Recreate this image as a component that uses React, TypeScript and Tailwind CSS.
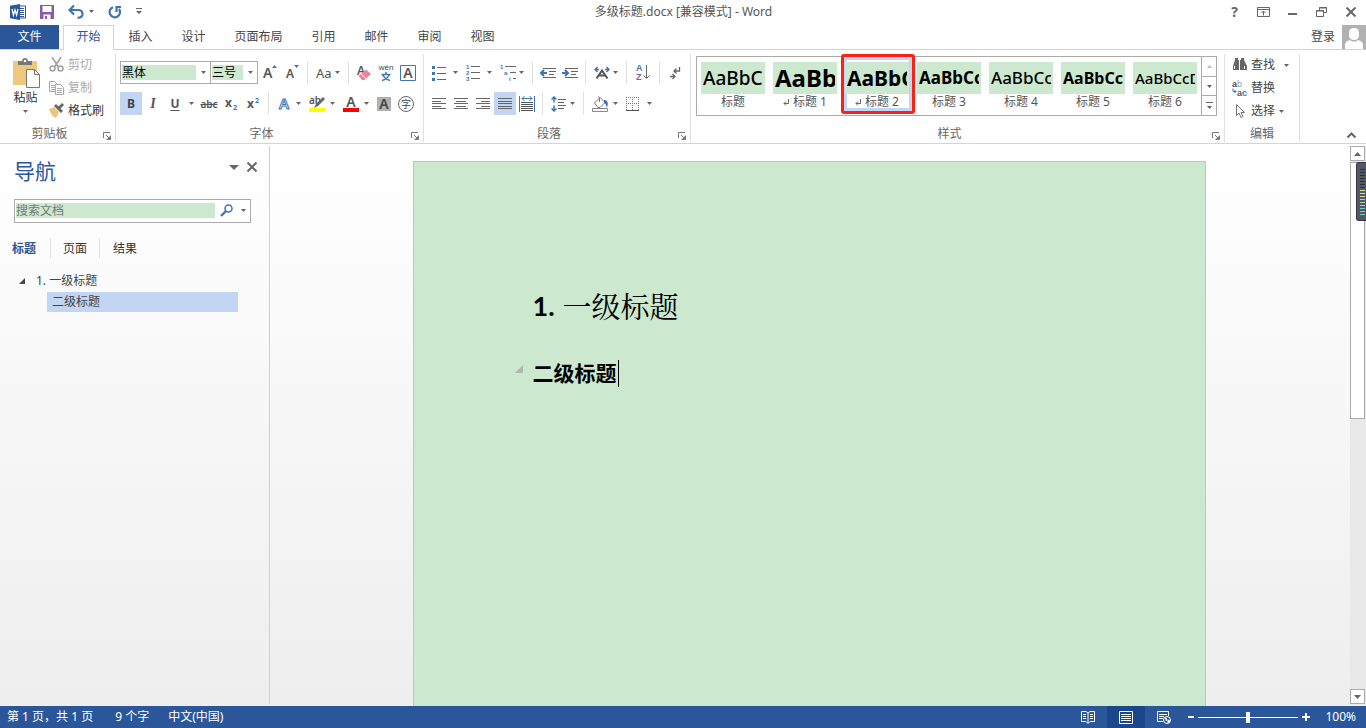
import React from 'react';
import clsx from 'clsx';

const TABS = [
  { label: '插入', width: 'w-[53px]' },
  { label: '设计', width: 'w-[53px]' },
  { label: '页面布局', width: 'w-[77px]' },
  { label: '引用', width: 'w-[53px]' },
  { label: '邮件', width: 'w-[53px]' },
  { label: '审阅', width: 'w-[53px]' },
  { label: '视图', width: 'w-[53px]' },
];

const STYLES = [
  { name: '标题', sample: 'AaBbC', text: 'text-[19px] font-medium', linked: false },
  { name: '标题 1', sample: 'AaBb', text: 'text-[24px] font-bold', linked: true },
  { name: '标题 2', sample: 'AaBbC', text: 'text-[21px] font-bold', linked: true, selected: true },
  { name: '标题 3', sample: 'AaBbCc', text: 'text-[17px] font-bold', linked: false },
  { name: '标题 4', sample: 'AaBbCc', text: 'text-[17px] font-medium', linked: false },
  { name: '标题 5', sample: 'AaBbCc', text: 'text-[16px] font-bold', linked: false },
  { name: '标题 6', sample: 'AaBbCcD', text: 'text-[15px] font-medium', linked: false },
];

const Caret = ({ className = 'text-[#666]' }: { className?: string }) => (
  <svg width="5" height="3" viewBox="0 0 5 3" className={clsx('shrink-0', className)} aria-hidden="true">
    <path d="M0 0h5L2.500 3z" fill="currentColor" />
  </svg>
);

const Sep = () => <span className="mx-1 h-[23px] w-px shrink-0 bg-[#e1e1e1]" />;

interface ToolProps {
  label: string;
  children: React.ReactNode;
  active?: boolean;
  width?: string;
}

const Tool: React.FC<ToolProps> = ({ label, children, active, width = 'w-[22px]' }) => (
  <button
    aria-label={label}
    className={clsx('flex h-[23px] shrink-0 items-center justify-center', width, active ? 'bg-[#c2d5f2]' : 'hover:bg-[#d5e1f2]')}
  >
    {children}
  </button>
);

// Icon with a drop-down arrow beside it
const SplitTool: React.FC<ToolProps> = ({ label, children, width = 'w-[34px]' }) => (
  <button aria-label={label} className={clsx('flex h-[23px] shrink-0 items-center justify-between px-1 hover:bg-[#d5e1f2]', width)}>
    {children}
    <Caret />
  </button>
);

const Group: React.FC<{ title: string; width: string; launcher?: boolean; children: React.ReactNode }> = ({
  title,
  width,
  launcher = true,
  children,
}) => (
  <section className={clsx('flex shrink-0 flex-col border-r border-[#e1e1e1]', width)}>
    <div className="h-[72px]">{children}</div>
    <div className="flex h-4 items-center">
      <span className="flex-1 text-center leading-4 text-[#666]">{title}</span>
      {launcher && (
        <button aria-label={`${title}设置`} className="flex w-4 justify-center pt-1">
          <svg width="8" height="8" viewBox="0 0 8 8" fill="none" stroke="#777">
            <path d="M.5 6V.5H7M3 3l3 3M7.500 3.500v4h-4" />
            <path d="M7 4v3H4z" fill="#777" stroke="none" />
          </svg>
        </button>
      )}
    </div>
  </section>
);

const Lines = ({ rows }: { rows: [number, number][] }) => (
  <svg width="14" height="12" viewBox="0 0 14 12" stroke="#666">
    {rows.map(([x1, x2], i) => (
      <path key={i} d={`M${x1} ${i * 2.5 + 0.5}H${x2}`} shapeRendering="crispEdges" />
    ))}
  </svg>
);

const TitleBar = () => (
  <header className="flex h-[25px] items-center pb-[2px]">
    <div className="flex flex-1 items-center pl-[10px]">
      <svg width="16" height="16" viewBox="0 0 16 16" aria-label="Word">
        <path d="M9 2h6.500v12H9z" fill="#fff" stroke="#2b579a" />
        <path d="M10 4.500h4M10 6.500h4M10 8.500h4M10 10.500h4M10 12.500h4" stroke="#2b579a" />
        <path d="M0 1.800L10 0v16L0 14.200z" fill="#2b579a" />
        <path d="M2 5l1.400 6L5 6l1.600 5L8 5" fill="none" stroke="#fff" strokeWidth="1.300" />
      </svg>
      <button aria-label="保存" className="ml-[14px]">
        <svg width="14" height="14" viewBox="0 0 14 14">
          <path d="M0 0h14v14H0z" fill="#8b5aa8" />
          <path d="M2.500 1h9v6h-9zM3.500 9.500h7V14h-7z" fill="#fff" />
          <path d="M5 11h2v3H5z" fill="#8b5aa8" />
        </svg>
      </button>
      <button aria-label="撤消" className="ml-[14px] flex items-center gap-[5px]">
        <svg width="16" height="14" viewBox="0 0 16 14" fill="none" stroke="#3f75b5" strokeWidth="2.200">
          <path d="M1.500 5H10c3 0 4.500 1.500 4.500 4s-2 3.800-5 3.800" />
          <path d="M6 .5L1.500 5 6 9.500" />
        </svg>
        <Caret />
      </button>
      <button aria-label="重复" className="ml-[14px]">
        <svg width="14" height="14" viewBox="0 0 14 14" fill="none" stroke="#3f75b5" strokeWidth="2.200">
          <path d="M5 2.200A5.200 5.200 0 1 0 11 4" />
          <path d="M8.500 7V2H13" />
        </svg>
      </button>
      <button aria-label="自定义快速访问工具栏" className="ml-[14px]">
        <svg width="6" height="7" viewBox="0 0 6 7" fill="#666">
          <path d="M0 0h6v1H0zM0 3h6L3 6z" />
        </svg>
      </button>
    </div>
    <h1 className="text-[#555]">多级标题.docx [兼容模式] - Word</h1>
    <div className="flex flex-1 items-center justify-end gap-4 pr-[9px] text-[#666]">
      <button aria-label="帮助" className="w-[13px] text-center text-[14px] leading-4 font-bold">?</button>
      <button aria-label="功能区显示选项">
        <svg width="13" height="10" viewBox="0 0 13 10" fill="none" stroke="currentColor">
          <path d="M.5.5h12v9H.5zM.5 2.500h12M6.500 8.500v-4M4.500 6l2-2 2 2" />
        </svg>
      </button>
      <button aria-label="最小化">
        <svg width="13" height="10" viewBox="0 0 13 10" fill="currentColor"><path d="M2 6h9v2H2z" /></svg>
      </button>
      <button aria-label="还原">
        <svg width="13" height="10" viewBox="0 0 13 10" fill="none" stroke="currentColor">
          <path d="M4.500 3V.5h7v5H9M1.500 3.500h7v6h-7zM4 1h8M1 4h8" />
        </svg>
      </button>
      <button aria-label="关闭">
        <svg width="13" height="10" viewBox="0 0 13 10" stroke="currentColor" strokeWidth="2"><path d="M2.500.5l9 9M11.500.5l-9 9" /></svg>
      </button>
    </div>
  </header>
);

const TabRow = () => (
  <nav className="flex h-[25px] items-stretch border-b border-[#d4d4d4]">
    <button className="w-[59px] bg-[#2b579a] text-white">文件</button>
    <button className="-mb-px ml-1 w-[51px] border border-b-0 border-[#d4d4d4] bg-white pb-[2px] text-[#2b579a]">开始</button>
    {TABS.map((tab) => (
      <button key={tab.label} className={clsx('text-[#444]', tab.width)}>{tab.label}</button>
    ))}
    <div className="ml-auto flex items-center gap-[7px]">
      <button className="text-[#444]">登录</button>
      <svg width="24" height="24" viewBox="0 0 24 24" aria-hidden="true">
        <path d="M0 0h24v24H0z" fill="#b1b1b1" />
        <rect x="7" y="3" width="10" height="12" rx="4.500" fill="#fff" />
        <path d="M3 24v-4c0-3 2-4 5-5 2 2 6 2 8 0 3 1 5 2 5 5v4z" fill="#fff" />
      </svg>
    </div>
  </nav>
);

const ClipboardGroup = () => (
  <Group title="剪贴板" width="w-[116px]">
    <div className="flex pt-[3px] pl-[11px]">
      <button className="flex w-[29px] flex-col items-center">
        <svg width="29" height="32" viewBox="0 0 29 32" aria-hidden="true">
          <path d="M2 4h24v24H2z" fill="#edc87e" />
          <path d="M7 8V4h4c0-4 6-4 6 0h4v4z" fill="#777" />
          <circle cx="14" cy="4" r="1.300" fill="#fff" />
          <path d="M15.500 12.500h8l5 5v13h-13z" fill="#fff" stroke="#777" />
          <path d="M23.500 12.500v5h5" fill="none" stroke="#777" />
        </svg>
        <span className="pt-px leading-4 whitespace-nowrap text-[#333]">粘贴</span>
        <span className="pt-1"><Caret className="block text-[#666]" /></span>
      </button>
      <div className="ml-[9px] flex flex-col">
        <button className="flex h-[23px] items-start gap-1 text-[#aaa]">
          <svg width="15" height="15" viewBox="0 0 15 15" fill="none" stroke="#a3a3a3" strokeWidth="1.600">
            <path d="M3 0l6.500 10M12 0L5.500 10" />
            <circle cx="3.500" cy="11.500" r="2.500" />
            <circle cx="11.500" cy="11.500" r="2.500" />
          </svg>
          <span className="leading-4">剪切</span>
        </button>
        <button className="flex h-[23px] items-start gap-1 text-[#aaa]">
          <svg width="15" height="15" viewBox="0 0 15 15" fill="#fff" stroke="#aaa">
            <path d="M.5 1.500h5l3 3v7h-8zM2 5.500h4M2 7.500h4M2 9.500h4" />
            <path d="M6.500 4.500h5l3 3v7h-8zM8 8.500h5M8 10.500h5M8 12.500h5" />
          </svg>
          <span className="leading-4">复制</span>
        </button>
        <button className="flex h-[23px] items-start gap-1 text-[#333]">
          <svg width="15" height="15" viewBox="0 0 15 15">
            <path d="M0 6l5-2 5 5-3 6c-3-1-6-5-7-9z" fill="#edc47c" />
            <path d="M5 3l2-2 2.500 2.500L13 0l2 2-3.500 3.500L14 8l-2 2z" fill="#666" />
          </svg>
          <span className="leading-4">格式刷</span>
        </button>
      </div>
    </div>
  </Group>
);

const FieldSelect = ({ label, value, width }: { label: string; value: string; width: string }) => (
  <div className={clsx('flex h-[23px] shrink-0 items-center border border-[#ababab] bg-white pl-px', width)}>
    <select aria-label={label} className="h-[15px] min-w-0 flex-1 appearance-none bg-[#cce8cf] leading-[15px] text-black">
      <option>{value}</option>
    </select>
    <span className="flex w-[14px] justify-center"><Caret /></span>
  </div>
);

const FontGroup = () => (
  <Group title="字体" width="w-[308px]">
    <div className="flex flex-col gap-2 pt-[7px] pl-1">
      <div className="flex">
        <FieldSelect label="字体" value="黑体" width="w-[91px]" />
        <FieldSelect label="字号" value="三号" width="-ml-px mr-px w-[48px]" />
        <Tool label="增大字号">
          <svg width="14" height="16" viewBox="0 0 14 16" className="overflow-visible">
            <text x="0" y="13" fontSize="14" fontWeight="600" fill="#555">A</text>
            <path d="M9 3l2.500-3L14 3z" fill="#3f75b5" />
          </svg>
        </Tool>
        <Tool label="减小字号">
          <svg width="14" height="16" viewBox="0 0 14 16" className="overflow-visible">
            <text x="1" y="13" fontSize="12" fontWeight="600" fill="#555">A</text>
            <path d="M9 0h5l-2.500 3z" fill="#3f75b5" />
          </svg>
        </Tool>
        <Sep />
        <SplitTool label="更改大小写" width="w-8">
          <span className="text-[13px] text-[#555]">Aa</span>
        </SplitTool>
        <Sep />
        <Tool label="清除所有格式">
          <svg width="16" height="16" viewBox="0 0 16 16" className="overflow-visible">
            <text x="1" y="10" fontSize="12" fontWeight="600" fill="#555">A</text>
            <path d="M2.500 11L10 4.500l5 4.500-6.500 6H6z" fill="#e7849b" />
            <path d="M5 8.500l4.500 5" stroke="#fff" />
          </svg>
        </Tool>
        <Tool label="拼音指南">
          <svg width="18" height="18" viewBox="0 0 18 18" className="overflow-visible">
            <text x="9" y="6" fontSize="8" textAnchor="middle" fill="#444" className="font-['Liberation_Sans',sans-serif]">wén</text>
            <path d="M9 8v2M4.500 10.500h9M6 11c1 2.500 3 4.500 7 5.500M12 11c-1 2.500-3 4.500-7 5.500" fill="none" stroke="#3f75b5" strokeWidth="1.500" />
          </svg>
        </Tool>
        <Tool label="字符边框">
          <svg width="16" height="16" viewBox="0 0 16 16" className="overflow-visible">
            <path d="M.5.5h15v15H.5z" fill="#fff" stroke="#3f75b5" />
            <text x="8" y="13" fontSize="14" fontWeight="600" textAnchor="middle" fill="#555">A</text>
          </svg>
        </Tool>
      </div>
      <div className="flex">
        <Tool label="加粗" active><span className="text-[12px] font-bold text-[#444]">B</span></Tool>
        <Tool label="倾斜"><span className="font-['Liberation_Serif',serif] text-[14px] font-bold text-[#555] italic">I</span></Tool>
        <SplitTool label="下划线">
          <span className="w-[14px] text-center font-bold text-[#555] underline underline-offset-2">U</span>
        </SplitTool>
        <Tool label="删除线"><span className="text-[10px] font-semibold text-[#555] line-through">abc</span></Tool>
        <Tool label="下标">
          <svg width="14" height="14" viewBox="0 0 14 14" className="overflow-visible">
            <text x="1" y="10" fontSize="12" fontWeight="700" fill="#555">x</text>
            <text x="9" y="13" fontSize="7" fontWeight="700" fill="#3f75b5">2</text>
          </svg>
        </Tool>
        <Tool label="上标">
          <svg width="14" height="14" viewBox="0 0 14 14" className="overflow-visible">
            <text x="1" y="11" fontSize="12" fontWeight="700" fill="#555">x</text>
            <text x="9" y="6" fontSize="7" fontWeight="700" fill="#3f75b5">2</text>
          </svg>
        </Tool>
        <Sep />
        <SplitTool label="文本效果" width="w-8">
          <svg width="14" height="16" viewBox="0 0 14 16" className="overflow-visible">
            <text x="7" y="13" fontSize="15" fontWeight="600" textAnchor="middle" fill="#fff" stroke="#3f75b5">A</text>
          </svg>
        </SplitTool>
        <SplitTool label="突出显示">
          <svg width="16" height="16" viewBox="0 0 16 16" className="overflow-visible">
            <path d="M0 12h16v4H0z" fill="#ff0" />
            <text x="0" y="8" fontSize="10" fontWeight="600" fill="#555">ab</text>
            <path d="M14 1l2 2-7 7-4 2 2-4z" fill="#666" />
          </svg>
        </SplitTool>
        <SplitTool label="字体颜色">
          <svg width="16" height="16" viewBox="0 0 16 16" className="overflow-visible">
            <path d="M0 12h16v4H0z" fill="#f00" />
            <text x="8" y="11" fontSize="14" fontWeight="600" textAnchor="middle" fill="#555">A</text>
          </svg>
        </SplitTool>
        <Tool label="字符底纹">
          <svg width="14" height="14" viewBox="0 0 14 14" className="overflow-visible">
            <path d="M0 0h14v14H0z" fill="#b1b1b1" />
            <text x="7" y="12" fontSize="14" fontWeight="600" textAnchor="middle" fill="#444">A</text>
          </svg>
        </Tool>
        <Tool label="带圈字符">
          <svg width="16" height="16" viewBox="0 0 16 16" className="overflow-visible">
            <circle cx="8" cy="8" r="7.500" fill="none" stroke="#666" />
            <text x="8" y="12" fontSize="10" textAnchor="middle" fill="#444">字</text>
          </svg>
        </Tool>
      </div>
    </div>
  </Group>
);

const ParagraphGroup = () => (
  <Group title="段落" width="w-[267px]">
    <div className="flex flex-col gap-2 pt-[7px] pl-1">
      <div className="flex">
        <SplitTool label="项目符号">
          <svg width="14" height="16" viewBox="0 0 14 16">
            <path d="M0 1h3v3H0zM0 7h3v3H0zM0 13h3v3H0z" fill="#3f75b5" />
            <path d="M5 2.500h9M5 8.500h9M5 14.500h9" stroke="#666" />
          </svg>
        </SplitTool>
        <SplitTool label="编号">
          <svg width="14" height="17" viewBox="0 0 14 17" className="overflow-visible">
            <g fontSize="6" fontWeight="700" fill="#3f75b5" className="font-['Liberation_Sans',sans-serif]">
              <text x="0" y="5">1</text>
              <text x="0" y="11">2</text>
              <text x="0" y="17">3</text>
            </g>
            <path d="M5 2.500h9M5 8.500h9M5 14.500h9" stroke="#666" />
          </svg>
        </SplitTool>
        <SplitTool label="多级列表" width="w-8">
          <svg width="16" height="17" viewBox="0 0 16 17" className="overflow-visible">
            <g fontSize="6" fontWeight="700" fill="#3f75b5" className="font-['Liberation_Sans',sans-serif]">
              <text x="0" y="5">1</text>
              <text x="4" y="11">a</text>
              <text x="9" y="17">i</text>
            </g>
            <path d="M5 2.500h11M10 8.500h6M13 14.500h3" stroke="#666" />
          </svg>
        </SplitTool>
        <Sep />
        <Tool label="减少缩进量">
          <svg width="16" height="12" viewBox="0 0 16 12">
            <path d="M3 1.500h13M9 4.500h7M9 7.500h5M3 10.500h13" stroke="#666" />
            <path d="M1 6h6M4 3L1 6l3 3" fill="none" stroke="#3f75b5" strokeWidth="2" />
          </svg>
        </Tool>
        <Tool label="增加缩进量">
          <svg width="16" height="12" viewBox="0 0 16 12">
            <path d="M3 1.500h13M9 4.500h7M9 7.500h5M3 10.500h13" stroke="#666" />
            <path d="M0 6h6M3 3l3 3-3 3" fill="none" stroke="#3f75b5" strokeWidth="2" />
          </svg>
        </Tool>
        <Sep />
        <SplitTool label="中文版式" width="w-8">
          <svg width="16" height="14" viewBox="0 0 16 14" fill="none">
            <path d="M2.500 12.500L8 4.500l5.500 8M5 9.500h6" stroke="#555" strokeWidth="2" />
            <path d="M5 3.500H1M3.500 1L1 3.500 3.500 6M11 3.500h4M12.500 1L15 3.500 12.500 6" stroke="#3f75b5" strokeWidth="1.500" />
          </svg>
        </SplitTool>
        <Sep />
        <Tool label="排序" width="w-6">
          <svg width="14" height="17" viewBox="0 0 14 17" className="overflow-visible">
            <g fontSize="9" fontWeight="700" className="font-['Liberation_Sans',sans-serif]">
              <text x="0" y="7" fill="#3f75b5">A</text>
              <text x="0" y="16" fill="#8b5aa8">Z</text>
            </g>
            <path d="M10.500 1v13M7.500 11.500l3 3 3-3" fill="none" stroke="#666" />
          </svg>
        </Tool>
        <Sep />
        <Tool label="显示编辑标记">
          <svg width="12" height="14" viewBox="0 0 12 14" fill="none" stroke="#666">
            <path d="M10.500 1v4H5M7.500 2.500L5 5l2.500 2.500M1 10.500h5M3.500 8L6 10.500 3.500 13" strokeWidth="1.300" />
          </svg>
        </Tool>
      </div>
      <div className="flex">
        <Tool label="左对齐"><Lines rows={[[0, 14], [0, 9], [0, 14], [0, 9], [0, 14]]} /></Tool>
        <Tool label="居中"><Lines rows={[[0, 14], [2, 12], [0, 14], [2, 12], [0, 14]]} /></Tool>
        <Tool label="右对齐"><Lines rows={[[0, 14], [5, 14], [0, 14], [5, 14], [0, 14]]} /></Tool>
        <Tool label="两端对齐" active><Lines rows={[[0, 14], [0, 14], [0, 14], [0, 14], [0, 14]]} /></Tool>
        <Tool label="分散对齐">
          <svg width="16" height="16" viewBox="0 0 16 16">
            <path d="M.5 0v16M15.500 0v16M3 2.500h10M5.500 0L3 2.500 5.500 5M10.500 0L13 2.500 10.500 5" fill="none" stroke="#3f75b5" />
            <path d="M2 6.500h12M2 8.500h12M2 10.500h12M2 12.500h12M2 14.500h12" stroke="#555" />
          </svg>
        </Tool>
        <Sep />
        <SplitTool label="行距" width="w-8">
          <svg width="15" height="16" viewBox="0 0 15 16">
            <path d="M3 1v5.500M3 9.500V15M.5 3.500L3 1l2.500 2.500M.5 12.500L3 15l2.500-2.500" fill="none" stroke="#3f75b5" strokeWidth="1.500" />
            <path d="M7 3.500h8M7 6.500h6M7 9.500h8M7 12.500h6" stroke="#666" />
          </svg>
        </SplitTool>
        <Sep />
        <SplitTool label="底纹">
          <svg width="16" height="16" viewBox="0 0 16 16" fill="none">
            <path d="M2.500 7L8 1.500l5 5L8 11.500H6z" fill="#fff" stroke="#777" />
            <path d="M7.500 6V1.500L6 .5" stroke="#777" />
            <path d="M12 4c4 0 4.500 3 3 8-1-3-1-4-3-5z" fill="#3f75b5" />
            <path d="M.5 12.500h15v3H.5z" fill="#fff" stroke="#888" />
          </svg>
        </SplitTool>
        <SplitTool label="边框">
          <svg width="14" height="14" viewBox="0 0 14 14" stroke="#777" fill="none">
            <path d="M.5 0v13M6.500 0v13M12.500 0v13M0 .5h13M0 6.500h13" strokeDasharray="1 1" />
            <path d="M0 13.500h13" stroke="#555" />
          </svg>
        </SplitTool>
      </div>
    </div>
  </Group>
);

const StylesGroup = () => (
  <Group title="样式" width="w-[534px]">
    <div className="flex pt-[2px] pl-[5px]">
      <div className="flex h-[60px] border border-[#ababab]">
        {STYLES.map((s) => (
          <button key={s.name} className="relative flex w-[72px] flex-col items-stretch px-1 pt-[5px]">
            {s.selected && <span className="absolute top-0 right-px bottom-1 left-[3px] border-[3px] border-[#c2d5f2]" />}
            <span className={clsx("relative flex h-8 bg-[#cce8cf] px-[2px] font-['Noto_Sans',sans-serif] text-black", s.text)}>
              <span className="overflow-hidden leading-8">{s.sample}</span>
            </span>
            <span className="relative flex items-center justify-center gap-1 leading-4 text-[#555]">
              {s.linked && (
                <svg width="6" height="7" viewBox="0 0 6 7" fill="none" stroke="#666"><path d="M5.500 0v4.500H1M3 2.500l-2 2 2 2" /></svg>
              )}
              {s.name}
            </span>
            {s.selected && <span className="absolute -top-[3px] -right-[2px] bottom-px left-0 rounded-[3px] border-[3px] border-[#fa2115]" />}
          </button>
        ))}
        <div className="flex w-[15px] flex-col divide-y divide-[#ababab] border-l border-[#ababab]">
          <button aria-label="向上" className="flex h-5 items-center justify-center">
            <svg width="5" height="3" viewBox="0 0 5 3"><path d="M0 3h5L2.500 0z" fill="#bbb" /></svg>
          </button>
          <button aria-label="向下" className="flex h-[19px] items-center justify-center"><Caret /></button>
          <button aria-label="其他" className="flex flex-1 items-center justify-center">
            <svg width="7" height="7" viewBox="0 0 7 7" fill="#666"><path d="M0 0h7v1H0zM1 4h5L3.500 7z" /></svg>
          </button>
        </div>
      </div>
    </div>
  </Group>
);

const EditingGroup = () => (
  <Group title="编辑" width="w-[75px]" launcher={false}>
    <div className="flex flex-col pt-[3px] pl-[7px] text-[#444]">
      <button className="flex h-[23px] items-start gap-1">
        <svg width="15" height="15" viewBox="0 0 15 15" fill="#666">
          <path d="M3 1h3v2h1v10H1V9l2-6zM9 1h3v2l3 6v4H8V3h1z" />
          <path d="M2.500 9v3M12.500 9v3M7.500 2v3M7.500 9v4" stroke="#fff" />
        </svg>
        <span className="leading-4">查找</span>
        <span className="pt-[7px] pl-[5px]"><Caret className="block text-[#666]" /></span>
      </button>
      <button className="flex h-[23px] items-start gap-1">
        <svg width="15" height="16" viewBox="0 0 15 16" className="overflow-visible">
          <g fontSize="9" fontWeight="700" className="font-['Liberation_Sans',sans-serif]">
            <text x="0" y="7" fill="#555">a<tspan fill="#999" fontWeight="400">b</tspan></text>
            <text x="5" y="16" fill="#555">a<tspan fill="#3f75b5">c</tspan></text>
          </g>
          <path d="M1 8.500v3h3M2.500 10L4 11.500 2.500 13" fill="none" stroke="#3f75b5" />
        </svg>
        <span className="leading-4">替换</span>
      </button>
      <button className="flex h-[23px] items-start gap-1">
        <svg width="15" height="16" viewBox="0 0 15 16" fill="#fff" stroke="#777">
          <path d="M4.500 1.500v11l2.500-2.500 2 4.500 2-1-2-4h3.500z" />
        </svg>
        <span className="leading-4">选择</span>
        <span className="pt-[7px]"><Caret className="block text-[#666]" /></span>
      </button>
    </div>
  </Group>
);

const NavigationPane = () => (
  <aside className="mt-[2px] mb-[2px] flex w-[270px] shrink-0 flex-col border-r border-[#d0d0d0]">
    <div className="flex items-center pt-[10px] pr-3 pl-[14px]">
      <h2 className="flex-1 text-[21px] leading-[30px] text-[#2b579a]">导航</h2>
      <button aria-label="任务窗格选项" className="mb-2">
        <svg width="10" height="5" viewBox="0 0 10 5"><path d="M0 0h10L5 5z" fill="#666" /></svg>
      </button>
      <button aria-label="关闭导航" className="mb-2 ml-2">
        <svg width="10" height="10" viewBox="0 0 10 10" stroke="#666" strokeWidth="2"><path d="M.5.5l9 9M9.500.5l-9 9" /></svg>
      </button>
    </div>
    <div className="mt-[13px] mr-[18px] ml-[14px] flex h-6 items-center border border-[#ababab] bg-white pb-px pl-px">
      <input
        aria-label="搜索文档"
        placeholder="搜索文档"
        className="h-[15px] min-w-0 flex-1 bg-[#cce8cf] leading-[15px] placeholder:text-[#777]"
      />
      <button aria-label="搜索" className="ml-[5px]">
        <svg width="13" height="13" viewBox="0 0 13 13" fill="none" stroke="#3f75b5">
          <circle cx="8.500" cy="4.500" r="3.500" strokeWidth="1.500" />
          <path d="M6 7l-5 5" strokeWidth="2.400" />
        </svg>
      </button>
      <button aria-label="搜索选项" className="mr-1 ml-2"><Caret /></button>
    </div>
    <div className="mt-[15px] flex h-5 items-center divide-x divide-[#e1e1e1] text-[#333]">
      <button className="h-5 w-[51px] pt-[2px] pr-[2px] text-center font-bold text-[#2b579a]">标题</button>
      <button className="h-5 w-[49px] pt-[2px]">页面</button>
      <button className="h-5 w-[50px] pt-[2px]">结果</button>
    </div>
    <ul className="mt-3 text-[#444]">
      <li className="flex h-[22px] items-center pl-[19px]">
        <svg width="6" height="6" viewBox="0 0 6 6"><path d="M6 0v6H0z" fill="#444" /></svg>
        <a href="#h1" className="ml-[11px] leading-5">1. 一级标题</a>
      </li>
      <li className="mr-[31px] ml-[47px] flex h-5 items-center bg-[#c2d5f2] pl-[5px]">
        <a href="#h2" className="leading-5">二级标题</a>
      </li>
    </ul>
  </aside>
);

const ScrollBar = () => (
  <div className="relative mt-[2px] mb-[2px] flex w-4 shrink-0 flex-col bg-[#e8e8e8]">
    <button aria-label="向上滚动" className="mr-px flex h-[15px] shrink-0 items-center justify-center border border-[#ababab] bg-white">
      <svg width="7" height="4" viewBox="0 0 7 4"><path d="M0 4h7L3.500 0z" fill="#666" /></svg>
    </button>
    <div className="mt-px mr-px h-[46%] border border-[#ababab] bg-white" />
    <button aria-label="向下滚动" className="mt-auto mr-px flex h-[15px] shrink-0 items-center justify-center border border-[#ababab] bg-white">
      <svg width="7" height="4" viewBox="0 0 7 4"><path d="M0 0h7L3.500 4z" fill="#666" /></svg>
    </button>
    {/* Floating level meter docked on the screen edge */}
    <div className="absolute top-4 right-0 h-[59px] w-[10px] rounded-l-[3px] border border-r-0 border-[#33373f] bg-[#545866] pt-[6px] pl-[3px]">
      <svg width="5" height="48" viewBox="0 0 5 48">
        {Array.from({ length: 16 }, (_, i) => (
          <path key={i} d={`M0 ${i * 3 + 0.5}h5`} stroke={i < 7 ? '#2c3038' : i < 10 ? '#d5df8a' : i < 13 ? '#a5d89c' : '#6fd3c8'} />
        ))}
      </svg>
    </div>
  </div>
);

const StatusBar = () => (
  <footer className="flex h-[22px] shrink-0 items-center bg-[#2b579a] pl-[7px] text-white">
    <span className="mr-[22px]">第 1 页，共 1 页</span>
    <span className="mr-[19px]">9 个字</span>
    <span>中文(中国)</span>
    <div className="ml-auto flex h-full items-center pr-[10px]">
      <button aria-label="阅读视图" className="flex h-full w-[38px] items-center justify-center">
        <svg width="14" height="13" viewBox="0 0 14 13" fill="none" stroke="#fff">
          <path d="M.5.5H5L7 2 9 .5h4.500v10H9l-2 2-2-2H.5zM7 2v10M2 3.500h3M2 5.500h3M2 7.500h3M9 3.500h3M9 5.500h3M9 7.500h3" />
        </svg>
      </button>
      <button aria-label="页面视图" className="flex h-full w-[38px] items-center justify-center bg-[#19478a]">
        <svg width="14" height="13" viewBox="0 0 14 13" fill="none" stroke="#fff">
          <path d="M.5.5h13v12H.5zM2 3.500h10M2 5.500h10M2 7.500h10M2 9.500h10" />
        </svg>
      </button>
      <button aria-label="Web 版式视图" className="flex h-full w-[38px] items-center justify-center">
        <svg width="14" height="13" viewBox="0 0 14 13" fill="none" stroke="#fff">
          <path d="M6 10.500H.5V.5h11V5M2 3.500h8M2 5.500h5M2 7.500h4" />
          <circle cx="10" cy="9" r="3.500" fill="#2b579a" />
          <path d="M8 7l2 1-1 2M11 9l2 1-2 2z" fill="#fff" />
        </svg>
      </button>
      <button aria-label="缩小" className="ml-[5px]">
        <svg width="6" height="8" viewBox="0 0 6 8"><path d="M0 3h6v2H0z" fill="#fff" /></svg>
      </button>
      <input
        type="range"
        aria-label="显示比例"
        defaultValue={50}
        className="mx-1 h-px w-[100px] appearance-none bg-white [&::-webkit-slider-thumb]:h-[11px] [&::-webkit-slider-thumb]:w-1 [&::-webkit-slider-thumb]:appearance-none [&::-webkit-slider-thumb]:bg-white"
      />
      <button aria-label="放大">
        <svg width="8" height="8" viewBox="0 0 8 8"><path d="M0 3h3V0h2v3h3v2H5v3H3V5H0z" fill="#fff" /></svg>
      </button>
      <button className="ml-[15px]">100%</button>
    </div>
  </footer>
);

const App: React.FC = () => (
  <div className="flex h-screen flex-col overflow-hidden bg-white font-['Noto_Sans','Noto_Sans_CJK_SC',sans-serif] text-[12px] leading-4">
    <TitleBar />
    <TabRow />

    {/* Ribbon */}
    <div className="flex shrink-0 border-b border-[#d4d4d4] pt-1 pb-px">
      <ClipboardGroup />
      <FontGroup />
      <ParagraphGroup />
      <StylesGroup />
      <EditingGroup />
      <div className="flex flex-1 items-end justify-end pr-[10px] pb-1">
        <button aria-label="折叠功能区">
          <svg width="9" height="6" viewBox="0 0 9 6" fill="none" stroke="#666" strokeWidth="2"><path d="M.5 5.500l4-4 4 4" /></svg>
        </button>
      </div>
    </div>

    {/* Workspace */}
    <div className="flex min-h-0 flex-1 bg-linear-to-b from-white to-[#eeeeee]">
      <NavigationPane />
      <main className="min-w-0 flex-1 overflow-hidden pt-[17px] pr-[2px]">
        <article className="mx-auto flex h-full w-[793px] flex-col border border-b-0 border-[#b5cdb8] bg-[#cce8cf] pt-[124px] pl-[119px] text-black">
          <h2 id="h1" className="flex items-center gap-2 text-[29px] leading-10">
            <span className="font-['Lato',sans-serif] text-[27px] font-bold">1.</span>
            <span className="font-['Noto_Serif_CJK_SC','Noto_Sans_CJK_SC',serif] font-normal">一级标题</span>
          </h2>
          <div className="mt-[34px] -ml-[18px] flex items-center">
            <svg width="8" height="8" viewBox="0 0 8 8" className="mb-[10px]"><path d="M8 0v8H0z" fill="#b5b5b5" /></svg>
            <h3 id="h2" className="ml-[10px] border-r border-black pr-px text-[21px] leading-[27px] font-bold">二级标题</h3>
          </div>
        </article>
      </main>
      <ScrollBar />
    </div>

    <StatusBar />
  </div>
);

export default App;
